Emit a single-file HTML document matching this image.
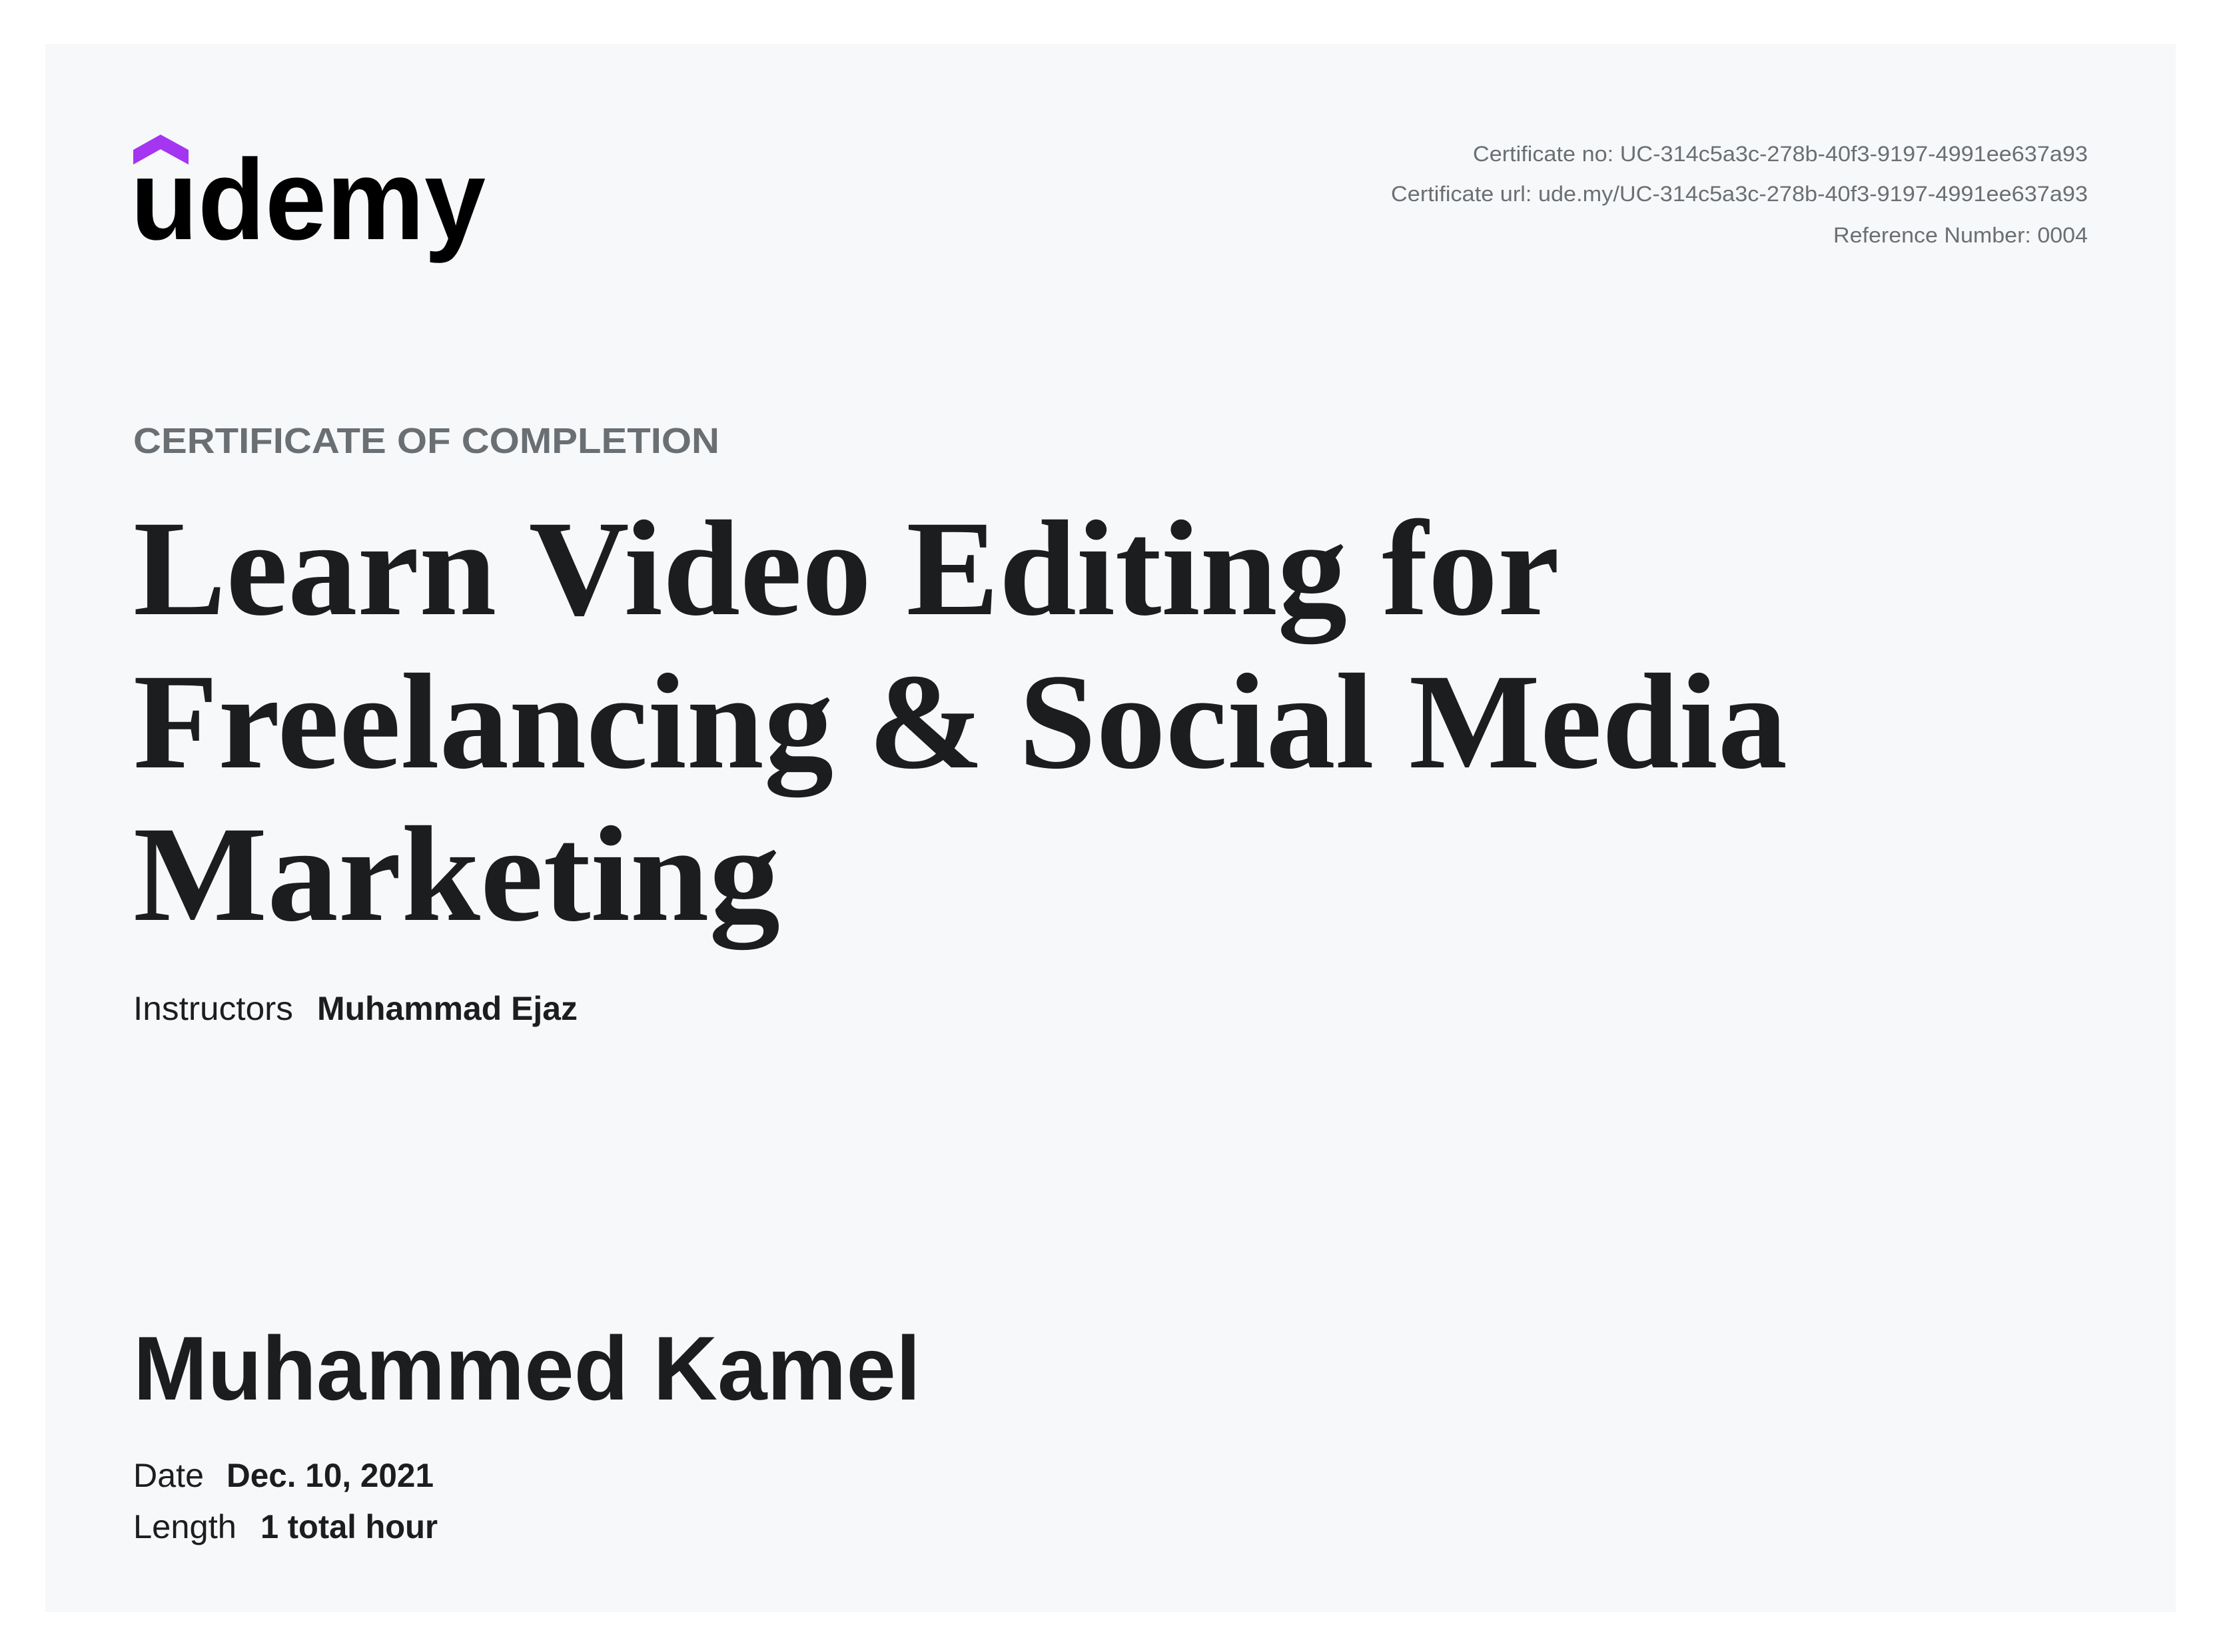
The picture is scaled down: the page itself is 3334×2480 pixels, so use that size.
<!DOCTYPE html>
<html><head><meta charset="utf-8"><style>
html,body{margin:0;padding:0;background:#fff;}
svg{display:block;}
</style></head><body>
<svg width="3334" height="2480" viewBox="0 0 3334 2480" xmlns="http://www.w3.org/2000/svg">
<rect x="0" y="0" width="3334" height="2480" fill="#ffffff"/>
<rect x="68" y="66" width="3198" height="2354" fill="#f7f8fa"/>
<polygon points="200,225 241,202 283,225 283,247 241,224 200,247" fill="#a435f0"/>
<text x="196" y="359" font-family="Liberation Sans, sans-serif" font-weight="bold" font-size="172" fill="#000" textLength="533" lengthAdjust="spacingAndGlyphs">udemy</text>
<g font-family="Liberation Sans, sans-serif" font-size="32" fill="#6a6f73" text-anchor="end">
<text x="3134" y="242" textLength="923" lengthAdjust="spacingAndGlyphs">Certificate no: UC-314c5a3c-278b-40f3-9197-4991ee637a93</text>
<text x="3134" y="302" textLength="1046" lengthAdjust="spacingAndGlyphs">Certificate url: ude.my/UC-314c5a3c-278b-40f3-9197-4991ee637a93</text>
<text x="3134" y="364" textLength="382" lengthAdjust="spacingAndGlyphs">Reference Number: 0004</text>
</g>
<text x="200" y="680" font-family="Liberation Sans, sans-serif" font-weight="bold" font-size="54" fill="#6a6f73" textLength="880" lengthAdjust="spacingAndGlyphs">CERTIFICATE OF COMPLETION</text>
<g font-family="Liberation Serif, serif" font-weight="bold" font-size="205" fill="#1c1d1f">
<text x="200" y="922" textLength="2141" lengthAdjust="spacingAndGlyphs">Learn Video Editing for</text>
<text x="200" y="1152" textLength="2483" lengthAdjust="spacingAndGlyphs">Freelancing &amp; Social Media</text>
<text x="200" y="1381" textLength="971" lengthAdjust="spacingAndGlyphs">Marketing</text>
</g>
<g font-family="Liberation Sans, sans-serif" font-size="50" fill="#1c1d1f">
<text x="200" y="1531" textLength="240" lengthAdjust="spacingAndGlyphs">Instructors</text>
<text x="476" y="1531" font-weight="bold" textLength="391" lengthAdjust="spacingAndGlyphs">Muhammad Ejaz</text>
</g>
<text x="200" y="2101" font-family="Liberation Sans, sans-serif" font-weight="bold" font-size="136" fill="#1c1d1f" textLength="1182" lengthAdjust="spacingAndGlyphs">Muhammed Kamel</text>
<g font-family="Liberation Sans, sans-serif" font-size="50" fill="#1c1d1f">
<text x="200" y="2232" textLength="106" lengthAdjust="spacingAndGlyphs">Date</text>
<text x="340" y="2232" font-weight="bold" textLength="311" lengthAdjust="spacingAndGlyphs">Dec. 10, 2021</text>
<text x="200" y="2309" textLength="155" lengthAdjust="spacingAndGlyphs">Length</text>
<text x="391" y="2309" font-weight="bold" textLength="266" lengthAdjust="spacingAndGlyphs">1 total hour</text>
</g>
</svg>
</body></html>
